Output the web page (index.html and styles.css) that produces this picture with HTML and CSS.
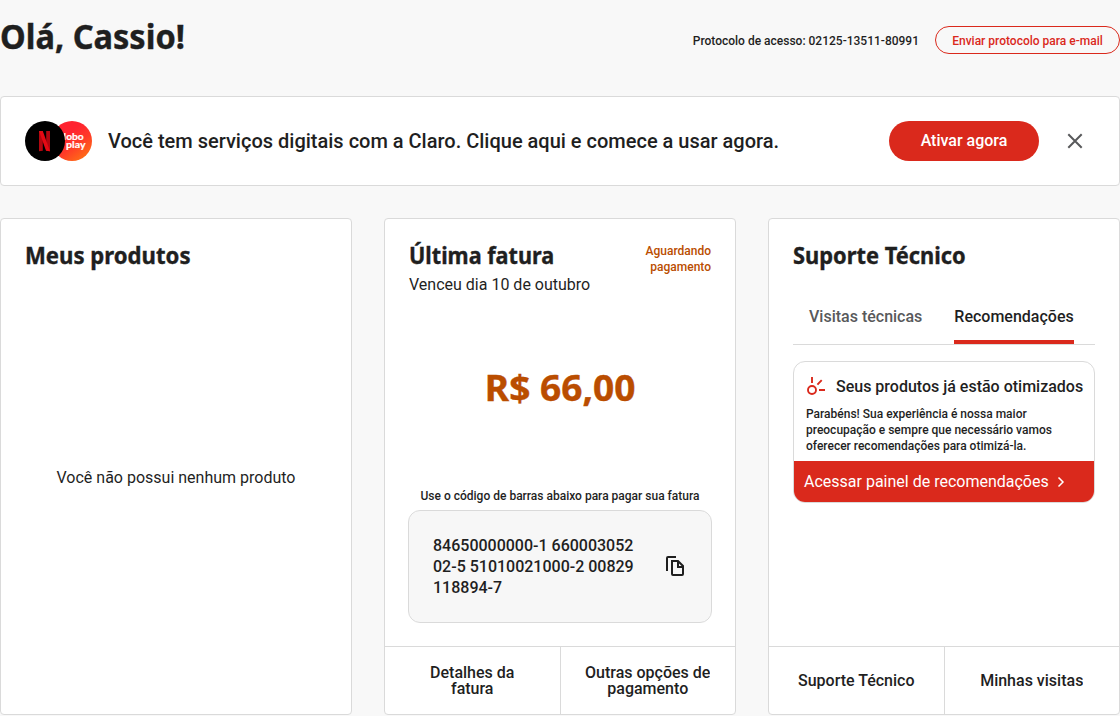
FILE: index.html
```html
<!DOCTYPE html>
<html lang="pt-BR">
<head>
<meta charset="utf-8">
<title>Minha conta</title>
<link rel="stylesheet" href="styles.css">
</head>
<body>
<header class="header">
  <h1 class="greeting"><span class="condense greeting-name">Olá, Cassio!</span></h1>
  <div class="protocol">
    <span class="protocol-text">Protocolo de acesso: 02125-13511-80991</span>
    <button class="outline-btn">Enviar protocolo para e-mail</button>
  </div>
</header>
<section class="banner">
  <svg class="brands" width="67" height="40" viewBox="0 0 67 40">
    <defs>
      <linearGradient id="play" x1="0.4" y1="0.3" x2="0.9" y2="1">
        <stop offset="0" stop-color="#ff2330"/><stop offset="0.4" stop-color="#ff3a28"/><stop offset="1" stop-color="#ff7a12"/>
      </linearGradient>
    </defs>
    <circle cx="47" cy="20" r="20" fill="url(#play)"/>
    <text class="brand-text" x="33.2" y="19" textLength="25.500" lengthAdjust="spacingAndGlyphs">globo</text>
    <text class="brand-text" x="41" y="27" textLength="19.5" lengthAdjust="spacingAndGlyphs">play</text>
    <circle cx="20" cy="20" r="20" fill="#000"/>
    <path d="M14 10h3.8v19.8l-3.8.5zM21.200 10H25v20.300l-3.800-.5z" fill="#b1060f"/>
    <path d="M14 10h3.800L25 30.300l-4-.5z" fill="#e50914"/>
  </svg>
  <p class="banner-text">Você tem serviços digitais com a Claro. Clique aqui e comece a usar agora.</p>
  <button class="primary-btn">Ativar agora</button>
  <svg class="close" width="24" height="24" viewBox="0 0 24 24"><path d="M5.300 5.300l13.400 13.400M18.700 5.300L5.300 18.700" fill="none" stroke="#58595b" stroke-width="2"/></svg>
</section>
<main class="cards">
  <section class="card">
    <div class="card-body">
      <h2 class="title"><span class="condense products-title">Meus produtos</span></h2>
      <p class="empty">Você não possui nenhum produto</p>
    </div>
  </section>
  <section class="card">
    <div class="card-body">
      <div class="invoice-head">
        <div>
          <h2 class="title"><span class="condense invoice-title">Última fatura</span></h2>
          <p class="due">Venceu dia 10 de outubro</p>
        </div>
        <span class="status">Aguardando pagamento</span>
      </div>
      <p class="amount"><span class="condense amount-value">R$ 66,00</span></p>
      <p class="hint">Use o código de barras abaixo para pagar sua fatura</p>
      <div class="barcode">
        <span>84650000000-1 660003052<br>02-5 51010021000-2 00829<br>118894-7</span>
        <svg class="copy" width="24" height="24" viewBox="0 0 24 24" fill="none" stroke="#1f1f1f" stroke-width="2"><path d="M4 17V4a1 1 0 0 1 1-1h8M9 7h6l5 5v8a1 1 0 0 1-1 1h-9a1 1 0 0 1-1-1z"/><path d="M15 7v6h5"/></svg>
      </div>
    </div>
    <footer class="card-footer">
      <a class="action"><span class="action-label">Detalhes da<br>fatura</span></a>
      <a class="action"><span class="action-label">Outras opções de<br>pagamento</span></a>
    </footer>
  </section>
  <section class="card">
    <div class="card-body">
      <h2 class="title"><span class="condense support-title">Suporte Técnico</span></h2>
      <nav class="tabs">
        <a class="tab">Visitas técnicas</a>
        <a class="tab active">Recomendações</a>
      </nav>
      <div class="tip">
        <div class="tip-body">
          <div class="tip-head">
            <svg width="20" height="20" viewBox="0 0 20 20" fill="none" stroke="#da291c" stroke-width="1.900"><circle cx="6" cy="14" r="4"/><path d="M6 1v6M11.400 8.600l4.300-4.500M13 14h6"/></svg>
            <h3 class="tip-title">Seus produtos já estão otimizados</h3>
          </div>
          <p class="tip-text">Parabéns! Sua experiência é nossa maior preocupação e sempre que necessário vamos oferecer recomendações para otimizá-la.</p>
        </div>
        <a class="tip-link">Acessar painel de recomendações
          <svg width="8" height="12" viewBox="0 0 8 12" fill="none" stroke="#fff" stroke-width="1.500"><path d="M1.500 1.500L6 6l-4.500 4.500"/></svg>
        </a>
      </div>
    </div>
    <footer class="card-footer">
      <a class="action"><span class="action-label">Suporte Técnico</span></a>
      <a class="action"><span class="action-label">Minhas visitas</span></a>
    </footer>
  </section>
</main>
</body>
</html>
```
FILE: styles.css
```css
* { box-sizing: border-box; margin: 0; padding: 0; }
body {
  width: 1120px;
  height: 716px;
  overflow: hidden;
  background: #f8f8f8;
  color: #1f1f1f;
  font: 400 16px/24px Roboto, sans-serif;
}
button { font-family: inherit; font-weight: 500; }
.condense { display: inline-block; transform-origin: left center; -webkit-text-stroke: 0.4px currentColor; }
.greeting-name { transform: scaleX(0.957); }
.products-title { transform: scaleX(0.922); }
.invoice-title { transform: scaleX(0.9); }
.support-title { transform: scaleX(0.91); }
.header { height: 96px; display: flex; justify-content: space-between; align-items: flex-start; }
.greeting { font: 700 34px/40px "Noto Sans", sans-serif; padding-top: 16px; white-space: nowrap; }
.protocol { display: flex; align-items: center; gap: 16px; padding-top: 26px; font-size: 12px; line-height: 16px; font-weight: 500; }
.protocol-text { padding-top: 2px; }
.outline-btn { width: 185px; height: 28px; padding-top: 1px; border: 1px solid #da291c; border-radius: 14px; background: transparent; color: #da291c; font-size: 12px; }
.banner { height: 90px; display: flex; align-items: center; padding: 0 32px 0 24px; background: #fff; border: 1px solid #dadada; border-radius: 4px; }
.brand-text { font: 700 10px Lato, sans-serif; fill: #fff; stroke: #fff; stroke-width: 0.2px; }
.banner-text { flex: 1; margin-left: 16px; font-size: 20px; font-weight: 500; }
.primary-btn { width: 150px; height: 40px; padding-bottom: 2px; border: 0; border-radius: 20px; background: #da291c; color: #fff; font-size: 16px; }
.close { margin-left: 24px; }
.cards { display: grid; grid-template-columns: repeat(3, 352px); gap: 32px; margin-top: 32px; }
.card { height: 497px; display: flex; flex-direction: column; background: #fff; border: 1px solid #dadada; border-radius: 4px; overflow: hidden; }
.card-body { flex: 1; display: flex; flex-direction: column; padding: 23px 24px 0; }
.title { font: 700 24px/26px "Noto Sans", sans-serif; white-space: nowrap; }
.empty { margin: auto; padding-bottom: 26px; }
.invoice-head { display: flex; justify-content: space-between; }
.due { margin-top: 5px; }
.status { width: 80px; padding-top: 1px; text-align: right; font-size: 12px; line-height: 16px; font-weight: 500; color: #ba4d00; }
.amount { margin-top: 71px; text-align: center; font: 700 36px/40px "Noto Sans", sans-serif; color: #ba4d00; white-space: nowrap; }
.amount-value { transform-origin: center; transform: scaleX(1.03); }
.hint { margin-top: 80px; text-align: center; font-size: 12px; line-height: 16px; font-weight: 500; }
.barcode { height: 113px; margin: 6px -1px 0; padding: 0 24px; display: flex; align-items: center; justify-content: space-between; background: #f7f7f7; border: 1px solid #dadada; border-radius: 12px; font-weight: 500; line-height: 21px; }
.copy { margin-bottom: 2px; }
.card-footer { height: 68px; flex: none; display: flex; border-top: 1px solid #dadada; }
.action { flex: 1; display: flex; align-items: center; justify-content: center; text-align: center; font-weight: 500; line-height: 16px; }
.action-label { overflow: hidden; }
.action + .action { border-left: 1px solid #dadada; }
.tabs { display: flex; height: 57px; margin-top: 20px; padding-left: 16px; gap: 32px; border-bottom: 1px solid #dadada; }
.tab { height: 56px; padding-top: 17px; font-weight: 500; color: #58595b; }
.active { color: #1f1f1f; border-bottom: 4px solid #da291c; }
.tip { margin-top: 16px; height: 142px; border: 1px solid #dadada; border-radius: 12px; overflow: hidden; }
.tip-body { height: 99px; padding: 12px 0 0 12px; }
.tip-head { display: flex; align-items: center; gap: 10px; height: 24px; }
.tip-title { padding-top: 2px; font-size: 16px; font-weight: 500; white-space: nowrap; }
.tip-text { width: 260px; margin-top: 8px; font-size: 12px; line-height: 16px; font-weight: 500; }
.tip-link { display: flex; align-items: center; gap: 8px; height: 41px; padding-left: 10px; background: #da291c; color: #fff; }
```
